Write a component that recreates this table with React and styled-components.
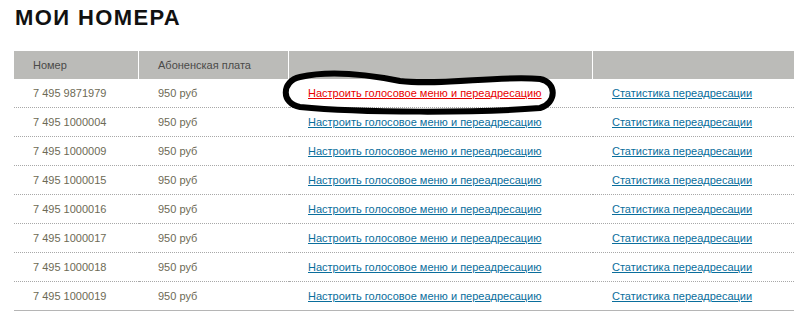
import React from "react";
import styled, { createGlobalStyle } from "styled-components";

const Global = createGlobalStyle`
  html, body { margin: 0; padding: 0; background: #fff; }
  body { font-family: "Liberation Sans", Arial, sans-serif; }
`;

const Page = styled.div`
  padding: 6px 6px 0 14px;
`;

const Title = styled.h1`
  margin: 0 0 21px 1px;
  font-size: 22px;
  line-height: 24px;
  font-weight: bold;
  letter-spacing: 1.4px;
  color: #111;
`;

const Table = styled.table`
  width: 780px;
  table-layout: fixed;
  border-collapse: separate;
  border-spacing: 0;
  font-size: 11px;
`;

const HeadCell = styled.th`
  box-sizing: border-box;
  width: ${(p) => p.$w}px;
  height: 28px;
  padding: 0 0 0 19px;
  background: #bbbbb8;
  color: #4a4a48;
  font-weight: normal;
  text-align: left;
  border-right: ${(p) => (p.$last ? "none" : "1px solid #fff")};
`;

const Row = styled.tr`
  & > td {
    border-bottom: ${(p) => (p.$last ? "1px solid #b5b5b5" : "1px dotted #a8a8a8")};
  }
`;

const Cell = styled.td`
  position: relative;
  height: 28px;
  padding: 0 0 0 19px;
  color: #6d6a55;
  white-space: nowrap;
`;

const Link = styled.a`
  color: ${(p) => (p.$active ? "#e80000" : "#0a6e9c")};
  text-decoration: underline;
  cursor: pointer;
`;

const Scribble = styled.svg`
  position: absolute;
  left: -8px;
  top: -8px;
  width: 280px;
  height: 44px;
  pointer-events: none;
  overflow: visible;
`;

const numbers = [
  "7 495 9871979",
  "7 495 1000004",
  "7 495 1000009",
  "7 495 1000015",
  "7 495 1000016",
  "7 495 1000017",
  "7 495 1000018",
  "7 495 1000019",
];

export default function App() {
  return (
    <Page>
      <Global />
      <Title>МОИ НОМЕРА</Title>
      <Table>
        <thead>
          <tr>
            <HeadCell $w={125}>Номер</HeadCell>
            <HeadCell $w={150}>Абоненская плата</HeadCell>
            <HeadCell $w={304}></HeadCell>
            <HeadCell $w={201} $last></HeadCell>
          </tr>
        </thead>
        <tbody>
          {numbers.map((n, i) => (
            <Row key={n} $last={i === numbers.length - 1}>
              <Cell>{n}</Cell>
              <Cell>950 руб</Cell>
              <Cell>
                <Link $active={i === 0}>Настроить голосовое меню и переадресацию</Link>
                {i === 0 && (
                  <Scribble viewBox="281 71 280 44">
                    <path
                      d="M300 77 C330 70, 370 75, 400 81 C440 86, 500 75, 540 79 C557 82, 557 103, 540 108 C480 113, 360 113, 300 107 C281 104, 281 81, 300 77 Z"
                      fill="none"
                      stroke="#000"
                      strokeWidth="6"
                      strokeLinecap="round"
                      strokeLinejoin="round"
                    />
                  </Scribble>
                )}
              </Cell>
              <Cell>
                <Link>Статистика переадресации</Link>
              </Cell>
            </Row>
          ))}
        </tbody>
      </Table>
    </Page>
  );
}
